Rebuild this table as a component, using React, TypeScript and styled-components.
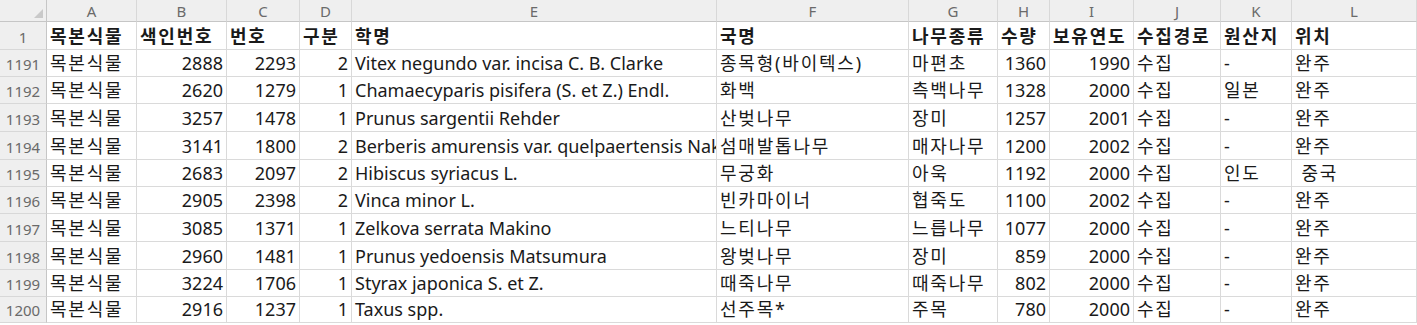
import styled, { createGlobalStyle } from "styled-components";

const GlobalStyle = createGlobalStyle`
  html, body {
    margin: 0;
    padding: 0;
    background: #ffffff;
  }
  * {
    box-sizing: border-box;
  }
`;

const COLUMNS = ["A", "B", "C", "D", "E", "F", "G", "H", "I", "J", "K", "L"];
const WIDTHS = "47px 90px 90px 73px 52px 365px 192px 89px 52px 84px 87px 71px 1fr";
const HEIGHTS = "22px 28px 27px 27px 28px 28px 27px 27px 28px 28px 27px 26px";

// numbers are right aligned, text left aligned
type Cell = string | number;

const HANGUL = /[\uac00-\ud7a3]/;

const header: Cell[] = [
  "목본식물",
  "색인번호",
  "번호",
  "구분",
  "학명",
  "국명",
  "나무종류",
  "수량",
  "보유연도",
  "수집경로",
  "원산지",
  "위치",
];

const rows: { num: number; cells: Cell[] }[] = [
  { num: 1191, cells: ["목본식물", 2888, 2293, 2, "Vitex negundo var. incisa C. B. Clarke", "종목형(바이텍스)", "마편초", 1360, 1990, "수집", "-", "완주"] },
  { num: 1192, cells: ["목본식물", 2620, 1279, 1, "Chamaecyparis pisifera (S. et Z.) Endl.", "화백", "측백나무", 1328, 2000, "수집", "일본", "완주"] },
  { num: 1193, cells: ["목본식물", 3257, 1478, 1, "Prunus sargentii Rehder", "산벚나무", "장미", 1257, 2001, "수집", "-", "완주"] },
  { num: 1194, cells: ["목본식물", 3141, 1800, 2, "Berberis amurensis var. quelpaertensis Nakai", "섬매발톱나무", "매자나무", 1200, 2002, "수집", "-", "완주"] },
  { num: 1195, cells: ["목본식물", 2683, 2097, 2, "Hibiscus syriacus L.", "무궁화", "아욱", 1192, 2000, "수집", "인도", " 중국"] },
  { num: 1196, cells: ["목본식물", 2905, 2398, 2, "Vinca minor L.", "빈카마이너", "협죽도", 1100, 2002, "수집", "-", "완주"] },
  { num: 1197, cells: ["목본식물", 3085, 1371, 1, "Zelkova serrata Makino", "느티나무", "느릅나무", 1077, 2000, "수집", "-", "완주"] },
  { num: 1198, cells: ["목본식물", 2960, 1481, 1, "Prunus yedoensis Matsumura", "왕벚나무", "장미", 859, 2000, "수집", "-", "완주"] },
  { num: 1199, cells: ["목본식물", 3224, 1706, 1, "Styrax japonica S. et Z.", "때죽나무", "때죽나무", 802, 2000, "수집", "-", "완주"] },
  { num: 1200, cells: ["목본식물", 2916, 1237, 1, "Taxus spp.", "선주목*", "주목", 780, 2000, "수집", "-", "완주"] },
];

export default function App() {
  return (
    <>
      <GlobalStyle />
      <Sheet>
        <Corner />
        {COLUMNS.map((c) => (
          <ColHead key={c}>{c}</ColHead>
        ))}

        <RowHead>1</RowHead>
        {header.map((h, i) => (
          <DataCell key={i} $bold $wide={HANGUL.test(String(h))}>
            {h}
          </DataCell>
        ))}

        {rows.map((r) => (
          <Row key={r.num} num={r.num} cells={r.cells} />
        ))}
      </Sheet>
    </>
  );
}

const Row = ({ num, cells }: { num: number; cells: Cell[] }) => (
  <>
    <RowHead>{num}</RowHead>
    {cells.map((c, i) => (
      <DataCell
        key={i}
        $num={typeof c === "number"}
        $wide={HANGUL.test(String(c))}
      >
        {c}
      </DataCell>
    ))}
  </>
);

const Sheet = styled.div`
  display: grid;
  grid-template-columns: ${WIDTHS};
  grid-template-rows: ${HEIGHTS};
  width: 1417px;
  height: 325px;
  overflow: hidden;
  font-family: "Noto Sans", "Noto Sans CJK KR", sans-serif;
  background: #fff;
`;

const Corner = styled.div`
  position: relative;
  background: #efefef;
  border-right: 1px solid #c6c6c6;
  border-bottom: 1px solid #c6c6c6;

  &::after {
    content: "";
    position: absolute;
    right: 3px;
    bottom: 3px;
    width: 9px;
    height: 9px;
    background: #c9c9c9;
    clip-path: polygon(100% 0, 100% 100%, 0 100%);
  }
`;

const ColHead = styled.div`
  display: flex;
  align-items: center;
  justify-content: center;
  background: #efefef;
  color: #6a6a6a;
  font-size: 15px;
  border-right: 1px solid #d8d8d8;
  border-bottom: 1px solid #c6c6c6;
`;

const RowHead = styled.div`
  display: flex;
  align-items: flex-end;
  justify-content: center;
  padding-bottom: 2px;
  background: #efefef;
  color: #6a6a6a;
  font-size: 15px;
  border-right: 1px solid #c6c6c6;
  border-bottom: 1px solid #d8d8d8;
`;

const DataCell = styled.div<{ $num?: boolean; $bold?: boolean; $wide?: boolean }>`
  display: flex;
  align-items: flex-end;
  justify-content: ${(p) => (p.$num ? "flex-end" : "flex-start")};
  padding: 0 3px 1px 3px;
  overflow: hidden;
  white-space: pre;
  color: #1a1a1a;
  font-size: 18px;
  letter-spacing: ${(p) => (p.$wide ? "1.8px" : "0")};
  font-weight: ${(p) => (p.$bold ? 700 : 400)};
  border-right: 1px solid #dadada;
  border-bottom: 1px solid #dadada;
`;
